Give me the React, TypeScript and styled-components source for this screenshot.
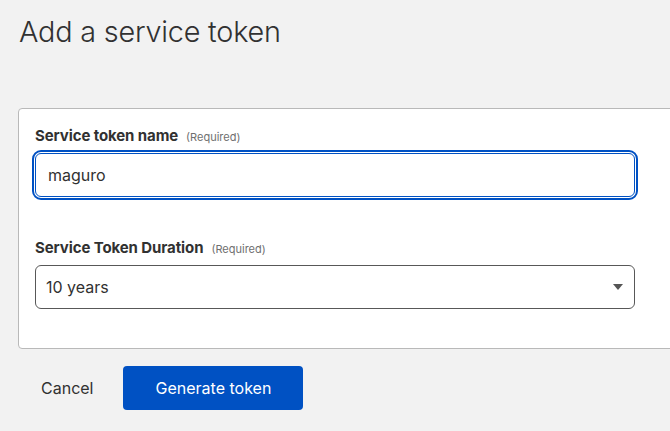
import React from "react";
import styled, { createGlobalStyle } from "styled-components";

const GlobalStyle = createGlobalStyle`
  html, body { margin: 0; padding: 0; background: #f2f2f2; overflow: hidden; }
  body { font-family: Inter, "Noto Sans", sans-serif; color: #313131; }
  * { box-sizing: border-box; }
`;

const Page = styled.div`
  width: 670px;
  height: 431px;
  overflow: hidden;
  padding: 12px 0 0 18px;
`;

const Title = styled.h1`
  margin: 0 0 0 1px;
  font-size: 28.8px;
  font-weight: 300;
  line-height: 40px;
  color: #313131;
  letter-spacing: -0.2px;
`;

const Card = styled.div`
  margin-top: 56px;
  width: 700px;
  background: #fff;
  border: 1px solid #b9b9b9;
  border-radius: 4px;
  padding: 16px;
`;

const Field = styled.div<{ $last?: boolean }>`
  width: 600px;
  margin-bottom: ${(p) => (p.$last ? "23px" : "40px")};
`;

const Label = styled.label`
  display: flex;
  align-items: baseline;
  gap: 8px;
  margin-bottom: 5px;
  line-height: 22px;
`;

const LabelText = styled.span`
  font-size: 15px;
  font-weight: 700;
  color: #313131;
  letter-spacing: -0.1px;
`;

const Required = styled.span`
  font-size: 11px;
  font-weight: 400;
  color: #6f6f6f;
`;

const Input = styled.input`
  display: block;
  width: 600px;
  height: 44px;
  border: 1px solid #0051c3;
  border-radius: 6px;
  outline: 2px solid #0051c3;
  outline-offset: 1px;
  padding: 0 12px;
  font-family: inherit;
  font-size: 16px;
  color: #313131;
  background: #fff;
`;

const Select = styled.div`
  position: relative;
  display: flex;
  align-items: center;
  width: 600px;
  height: 44px;
  border: 1px solid #585858;
  border-radius: 6px;
  padding: 0 10px;
  font-size: 16px;
  color: #313131;
  background: #fff;
`;

const Caret = styled.svg`
  position: absolute;
  right: 11px;
  top: 18px;
`;

const Actions = styled.div`
  display: flex;
  align-items: center;
  margin-top: 17px;
  padding-left: 5px;
  gap: 12px;
`;

const TextButton = styled.button`
  background: none;
  border: none;
  padding: 0 18px;
  height: 44px;
  font-family: inherit;
  font-size: 16px;
  color: #313131;
`;

const PrimaryButton = styled.button`
  background: #0051c3;
  border: none;
  border-radius: 4px;
  width: 180px;
  height: 44px;
  font-family: inherit;
  font-size: 16px;
  color: #fff;
`;

export default function App() {
  return (
    <>
      <GlobalStyle />
      <Page>
        <Title>Add a service token</Title>
        <Card>
          <Field>
            <Label>
              <LabelText>Service token name</LabelText>
              <Required>(Required)</Required>
            </Label>
            <Input defaultValue="maguro" />
          </Field>
          <Field $last>
            <Label>
              <LabelText>Service Token Duration</LabelText>
              <Required>(Required)</Required>
            </Label>
            <Select>
              10 years
              <Caret width="10" height="6" viewBox="0 0 10 6">
                <path d="M0 0h10L5 6z" fill="#555" />
              </Caret>
            </Select>
          </Field>
        </Card>
        <Actions>
          <TextButton>Cancel</TextButton>
          <PrimaryButton>Generate token</PrimaryButton>
        </Actions>
      </Page>
    </>
  );
}
